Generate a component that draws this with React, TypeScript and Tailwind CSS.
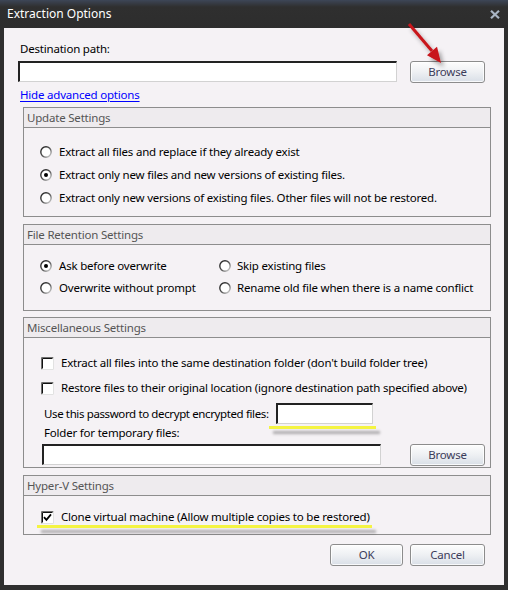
import React from 'react';

function Radio({ checked = false }: { checked?: boolean }) {
  return (
    <svg width="12" height="12" viewBox="0 0 12 12" className="flex-none">
      <defs>
        <linearGradient id={checked ? 'rg-on' : 'rg-off'} x1="0" y1="0" x2="1" y2="1">
          <stop offset="0" stopColor="#1a1a1a" />
          <stop offset="0.55" stopColor="#555" />
          <stop offset="1" stopColor="#e4e4e4" />
        </linearGradient>
      </defs>
      <circle cx="6" cy="6" r="5.2" fill="#fff" stroke={`url(#${checked ? 'rg-on' : 'rg-off'})`} strokeWidth="1.4" />
      {checked && <circle cx="6" cy="6" r="2" fill="#000" />}
    </svg>
  );
}

function Checkbox({ checked = false }: { checked?: boolean }) {
  return (
    <svg width="13" height="13" viewBox="0 0 13 13" className="flex-none">
      <rect x="0" y="0" width="13" height="13" fill="#fff" />
      <path d="M0.5 12.5 V0.5 H12.5" fill="none" stroke="#6f6f6f" />
      <path d="M1.5 11.5 V1.5 H11.5" fill="none" stroke="#111" />
      <path d="M0.5 12.5 H12.5 V0.5" fill="none" stroke="#e2e2e2" />
      {checked && <path d="M3 6.2 L5.4 8.8 L10 3.4" fill="none" stroke="#000" strokeWidth="1.8" />}
    </svg>
  );
}

function Button({ label, width }: { label: string; width: string }) {
  return (
    <button
      className={`${width} h-[22px] flex-none rounded-[3px] border border-[#8c8c8c] bg-linear-to-b from-[#fdfdfd] via-[#eef0f3] to-[#d9dfe7] text-[#3c3c5a] shadow-[inset_0_0_0_1px_rgba(255,255,255,0.8)]`}
    >
      {label}
    </button>
  );
}

function Field({ width }: { width: string }) {
  return (
    <div
      className={`${width} h-[21px] flex-none bg-white border-t-2 border-l-2 border-t-[#222] border-l-[#222] border-b border-r border-b-[#d2d2d2] border-r-[#d2d2d2]`}
    />
  );
}

function Group({ title, height, children }: { title: string; height: string; children: React.ReactNode }) {
  return (
    <div className={`ml-[5px] w-[468px] ${height} border border-[#8d8d8d] flex flex-col`}>
      <div className="h-[20px] flex-none flex items-center pl-[3px] bg-[#eeebee] border-b border-[#8d8d8d] text-[#555]">
        {title}
      </div>
      {children}
    </div>
  );
}

export default function App() {
  return (
    <div className="relative w-[508px] h-[590px] bg-[#2f2f2f] flex flex-col font-['Noto_Sans',sans-serif] text-[11.5px] tracking-[-0.2px] leading-[16px] text-black whitespace-nowrap">
      {/* Title bar */}
      <div className="h-[28px] flex-none flex items-center justify-between pl-[7px] pr-[8px] bg-linear-to-b from-[#3d4657] via-[#2f2f2f] via-25% to-[#2d2d2d]">
        <span className="text-white text-[12px] tracking-normal">Extraction Options</span>
        <svg width="10" height="9" viewBox="0 0 10 9" className="mt-[1px]">
          <path d="M1 0.8 L9 8.2 M9 0.8 L1 8.2" stroke="#a9b4c3" strokeWidth="2.2" />
        </svg>
      </div>

      {/* Client area */}
      <div className="relative flex-1 mx-[4px] mb-[5px] bg-[#f5f2f5] flex flex-col pl-[14px] pr-[19px]">
        <div className="mt-[13px] ml-[2px]">Destination path:</div>
        <div className="mt-[4px] flex items-start gap-[13px]">
          <Field width="w-[379px]" />
          <Button label="Browse" width="w-[75px]" />
        </div>
        <div className="mt-[4px] ml-[2px]">
          <span className="text-[#0000ff] underline underline-offset-2">Hide advanced options</span>
        </div>

        <div className="mt-[4px]">
          <Group title="Update Settings" height="h-[110px]">
            <div className="flex flex-col gap-[7px] pt-[16px] pl-[16px]">
              <div className="flex items-center gap-[7px]">
                <Radio />
                <span>Extract all files and replace if they already exist</span>
              </div>
              <div className="flex items-center gap-[7px]">
                <Radio checked />
                <span>Extract only new files and new versions of existing files.</span>
              </div>
              <div className="flex items-center gap-[7px]">
                <Radio />
                <span>Extract only new versions of existing files. Other files will not be restored.</span>
              </div>
            </div>
          </Group>
        </div>

        <div className="mt-[7px]">
          <Group title="File Retention Settings" height="h-[87px]">
            <div className="grid grid-cols-[179px_1fr] gap-y-[6px] pt-[13px] pl-[16px]">
              <div className="flex items-center gap-[7px]">
                <Radio checked />
                <span>Ask before overwrite</span>
              </div>
              <div className="flex items-center gap-[6px]">
                <Radio />
                <span>Skip existing files</span>
              </div>
              <div className="flex items-center gap-[7px]">
                <Radio />
                <span>Overwrite without prompt</span>
              </div>
              <div className="flex items-center gap-[6px]">
                <Radio />
                <span>Rename old file when there is a name conflict</span>
              </div>
            </div>
          </Group>
        </div>

        <div className="mt-[6px]">
          <Group title="Miscellaneous Settings" height="h-[151px]">
            <div className="flex flex-col pt-[17px] pl-[17px]">
              <div className="flex items-center gap-[7px]">
                <Checkbox />
                <span>Extract all files into the same destination folder (don't build folder tree)</span>
              </div>
              <div className="mt-[9px] flex items-center gap-[7px]">
                <Checkbox />
                <span>Restore files to their original location (ignore destination path specified above)</span>
              </div>
              <div className="mt-[7px] ml-[3px] flex items-center">
                <span className="w-[232px] tracking-[-0.38px]">Use this password to decrypt encrypted files:</span>
                <Field width="w-[97px]" />
              </div>
              <div className="mt-[1px] ml-[3px]">Folder for temporary files:</div>
              <div className="mt-[3px] ml-[1px] flex items-start gap-[29px]">
                <Field width="w-[339px]" />
                <Button label="Browse" width="w-[75px]" />
              </div>
            </div>
          </Group>
        </div>

        <div className="mt-[7px]">
          <Group title="Hyper-V Settings" height="h-[60px]">
            <div className="pt-[13px] pl-[17px] flex items-center gap-[7px]">
              <Checkbox checked />
              <span>Clone virtual machine (Allow multiple copies to be restored)</span>
            </div>
          </Group>
        </div>

        <div className="mt-[9px] flex justify-end gap-[7px]">
          <Button label="OK" width="w-[73px]" />
          <Button label="Cancel" width="w-[75px]" />
        </div>

        {/* Yellow annotation underlines */}
        <div className="absolute left-[265px] top-[398px] w-[107px] h-[3px] bg-[#f4f442] shadow-[4px_5px_3px_rgba(0,0,0,0.3)]" />
        <div className="absolute left-[33px] top-[497px] w-[335px] h-[3px] bg-[#f4f442] shadow-[4px_5px_3px_rgba(0,0,0,0.3)]" />
      </div>

      {/* Red annotation arrow */}
      <svg width="60" height="60" viewBox="400 15 60 60" className="absolute left-[400px] top-[15px]">
        <defs>
          <filter id="arrow-shadow" x="-50%" y="-50%" width="200%" height="200%">
            <feDropShadow dx="3" dy="4" stdDeviation="2" floodColor="#000" floodOpacity="0.35" />
          </filter>
        </defs>
        <g filter="url(#arrow-shadow)">
          <path d="M409 24 L432 51" stroke="#c8141a" strokeWidth="3" />
          <path d="M441 63 L437 46.8 L427 55.2 Z" fill="#c8141a" />
        </g>
      </svg>
    </div>
  );
}
